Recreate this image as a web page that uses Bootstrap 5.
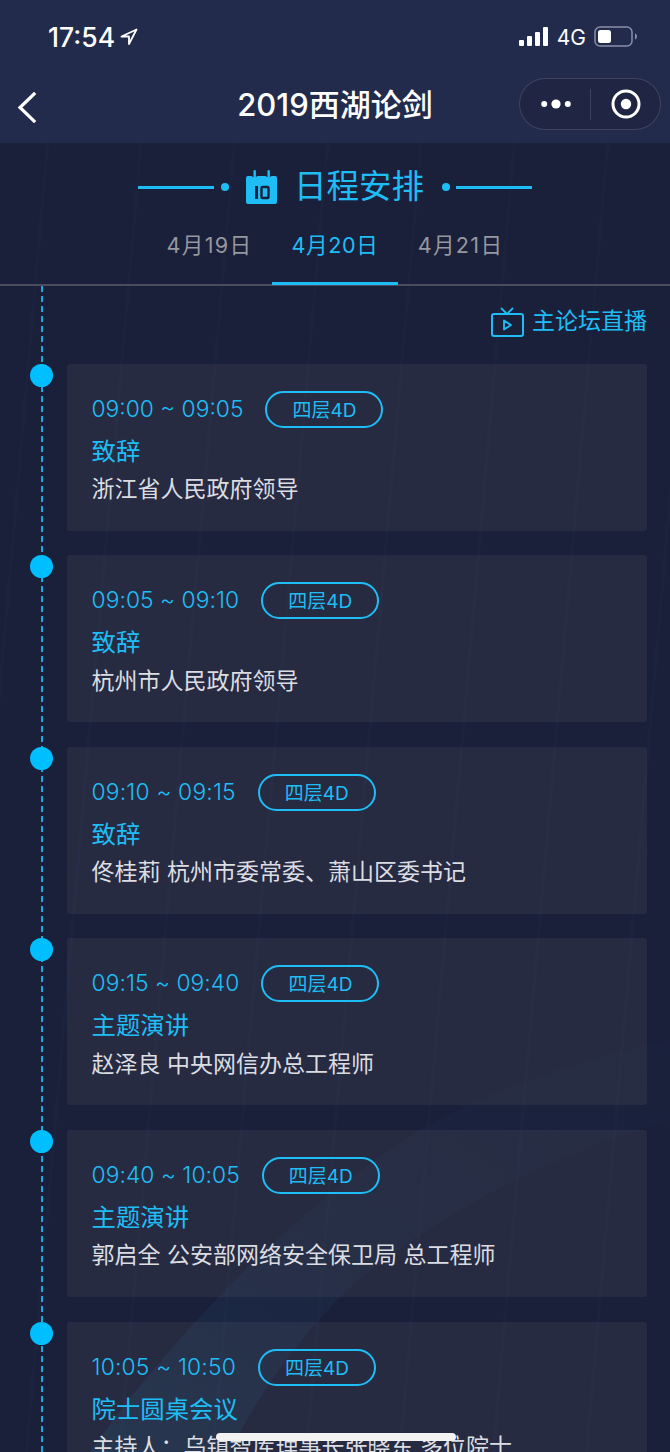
<!DOCTYPE html>
<html lang="zh">
<head>
<meta charset="utf-8">
<link href="https://cdn.jsdelivr.net/npm/bootstrap@5.3.0/dist/css/bootstrap.min.css" rel="stylesheet">
<style>
html,body{height:1452px;overflow:hidden}
body{width:670px;background:#1a203a;color:#fff;font-family:"Inter","Noto Sans CJK SC",sans-serif;position:relative}
.cjk{font-family:"Inter","Noto Sans CJK SC",sans-serif}
.streaks{position:absolute;inset:143px 0 0 0;pointer-events:none;
 background:repeating-linear-gradient(95deg,transparent 0 46px,rgba(60,95,145,.035) 46px 49px,transparent 49px 93px);}
.glow{position:absolute;left:0;top:0;pointer-events:none}
.topbar{background:#232b4c;height:143px;position:relative;z-index:1}
.statusrow{height:72px;padding:2px 32px 0 48px}
.clock{font-size:26.5px;font-weight:500;line-height:1;font-family:"Inter",sans-serif}
.locarrow{margin-left:5px}
.net{font-size:21px;line-height:1;font-family:"Inter",sans-serif}
.navrow{height:71px;position:relative}
.navtitle{font-size:31px;font-weight:500;line-height:1;padding-bottom:7px}
.backbtn{position:absolute;left:17px;top:20px}
.capsule{position:absolute;left:519px;top:6px;width:142px;height:52px;border:1px solid rgba(255,255,255,.14);border-radius:26px;background:#1f2543}
.capdots{margin-left:21px}
.capsep{width:1px;height:31px;background:rgba(255,255,255,.14);margin-left:19px}
.capring{margin-left:20px}
.content{position:relative;z-index:1}
.heading{height:88px;padding-top:16px}
.headrow{height:56px}
.hline{width:76px;height:3px;background:#1fbdf6}
.hdot{width:8px;height:8px;border-radius:50%;background:#1fbdf6}
.hdot-left{margin:0 16px 0 7px}
.hdot-right{margin:0 6px 0 18px}
.htitle{font-size:32.5px;line-height:1;color:#1fbdf6;margin-left:16px;padding-top:1px}
.tabsrow{height:55px;border-bottom:2px solid #4a4c5e}
.daytab{width:125.5px;height:54px;font-size:21.6px;line-height:1;color:#96979f;letter-spacing:1.3px;padding-top:4px}
.daytab.current{color:#1fbdf6;border-bottom:3px solid #1fbdf6;margin-bottom:-1px;letter-spacing:.6px}
.timeline{position:relative;padding:0 23px 0 67px;height:1200px}
.vline{position:absolute;left:41px;top:0;bottom:0;width:2px;opacity:.85;
 background:repeating-linear-gradient(180deg,#1fbdf6 0 6px,transparent 6px 10px)}
.live{height:77.6px;color:#1fbdf6;font-size:23px;line-height:1;padding-bottom:6px}
.event{position:relative;height:167px;margin-bottom:24.6px;background:rgba(255,240,200,.055);border-radius:3px;padding:27px 25px 0 24.5px}
.pin{position:absolute;left:-37.5px;top:0;width:23px;height:23px;border-radius:50%;background:#00bfff}
.slot{font-size:22.8px;line-height:33px;color:#1fbdf6;font-weight:300;padding-bottom:2px}
.ones1{letter-spacing:.06px}
.ones2{letter-spacing:.2px}
.room{width:118px;height:37px;border:2px solid #1fbdf6;border-radius:19px;color:#1fbdf6;font-size:19px;line-height:1;margin-left:22px;padding-top:2px}
.evtitle{font-size:24.4px;line-height:1;color:#1fbdf6;margin-top:11px}
.evbody{font-size:23px;line-height:1;color:#dcdde2;margin-top:15px;white-space:nowrap}
.homebar{position:absolute;left:216px;top:1433px;width:240px;height:8px;border-radius:4px;background:#f2f2f2;z-index:3}
</style>
</head>
<body>
<div class="streaks"></div>
<svg class="glow" width="670" height="1452" viewBox="0 0 670 1452">
  <defs><linearGradient id="bandfade" x1="0" y1="1" x2="1" y2="0"><stop offset="0" stop-color="#1d6c8e" stop-opacity=".17"/><stop offset=".6" stop-color="#2a5a84" stop-opacity=".05"/><stop offset="1" stop-color="#2a5a84" stop-opacity=".02"/></linearGradient></defs>
  <path d="M90 1452C170 1340 290 1210 420 1130 510 1080 600 1055 670 1040V1120C560 1150 450 1210 370 1270 310 1320 260 1390 230 1452Z" fill="url(#bandfade)"/>
</svg>
<header class="topbar">
  <div class="statusrow d-flex align-items-center justify-content-between">
    <div class="d-flex align-items-center">
      <span class="clock">17:54</span>
      <svg class="locarrow" width="18" height="18" viewBox="0 0 18 18"><path d="M16.5 1.5 1.5 8.5h7.5v7.5z" fill="none" stroke="#fff" stroke-width="1.8" stroke-linejoin="round"/></svg>
    </div>
    <div class="d-flex align-items-center gap-2">
      <svg width="30" height="20" viewBox="0 0 30 20"><g fill="#fff"><rect x="0" y="13" width="5" height="6" rx="1"/><rect x="8" y="9" width="5" height="10" rx="1"/><rect x="16" y="5" width="5" height="14" rx="1"/><rect x="24" y="0" width="5" height="19" rx="1"/></g></svg>
      <span class="net">4G</span>
      <svg width="44" height="22" viewBox="0 0 44 22"><rect x="1" y="1" width="37" height="19" rx="5" fill="none" stroke="#8a8fa6" stroke-width="1.5"/><rect x="4" y="4" width="13" height="13" rx="2.5" fill="#fff"/><path d="M41 7.5c1.5.6 2 2 2 3s-.5 2.4-2 3z" fill="#8a8fa6"/></svg>
    </div>
  </div>
  <div class="navrow d-flex align-items-center justify-content-center">
    <svg class="backbtn" width="20" height="31" viewBox="0 0 20 31"><path d="M17 2 3 15.5 17 29" fill="none" stroke="#fff" stroke-width="3.2" stroke-linecap="square"/></svg>
    <span class="navtitle cjk">2019西湖论剑</span>
    <div class="capsule d-flex align-items-center">
      <svg class="capdots" width="30" height="12" viewBox="0 0 30 12"><g fill="#fff"><circle cx="3.2" cy="6" r="3"/><circle cx="15" cy="6" r="4.6"/><circle cx="26.8" cy="6" r="3"/></g></svg>
      <span class="capsep"></span>
      <svg class="capring" width="30" height="30" viewBox="0 0 30 30"><circle cx="15" cy="15" r="13" fill="none" stroke="#fff" stroke-width="3"/><circle cx="15" cy="15" r="5.2" fill="#fff"/></svg>
    </div>
  </div>
</header>
<main class="content">
  <div class="heading d-flex align-items-start justify-content-center">
    <div class="headrow d-flex align-items-center">
      <span class="hline"></span><span class="hdot hdot-left"></span>
      <svg width="33" height="34" viewBox="0 0 33 34"><path d="M3 6h3.500a4.500 4.500 0 0 0 6 0h8a4.500 4.500 0 0 0 6 0H30a2 2 0 0 1 2 2v24a2 2 0 0 1-2 2H3a2 2 0 0 1-2-2V8a2 2 0 0 1 2-2z" fill="#1fbdf6"/><rect x="8.500" y="0" width="2.400" height="9" rx="1.200" fill="#1fbdf6"/><rect x="22.500" y="0" width="2.400" height="9" rx="1.200" fill="#1fbdf6"/><rect x="10" y="16" width="3" height="13" fill="#1a203a"/><rect x="16.500" y="17" width="7" height="11" rx="1" fill="none" stroke="#1a203a" stroke-width="2.400"/></svg>
      <span class="htitle cjk">日程安排</span>
      <span class="hdot hdot-right"></span><span class="hline"></span>
    </div>
  </div>
  <div class="tabsrow d-flex justify-content-center">
    <div class="daytab d-flex align-items-start justify-content-center">4月19日</div>
    <div class="daytab current d-flex align-items-start justify-content-center">4月20日</div>
    <div class="daytab d-flex align-items-start justify-content-center">4月21日</div>
  </div>
  <section class="timeline">
    <div class="vline"></div>
    <div class="live d-flex align-items-center justify-content-end gap-2">
      <svg width="33" height="30" viewBox="0 0 33 30"><path d="M10 1l6 6 6-6" fill="none" stroke="#1fbdf6" stroke-width="1.8"/><rect x="1" y="7" width="31" height="22" rx="2" fill="none" stroke="#1fbdf6" stroke-width="2"/><path d="M13 13.500v9l7-4.500z" fill="none" stroke="#1fbdf6" stroke-width="1.8" stroke-linejoin="round"/></svg>
      <span>主论坛直播</span>
    </div>
    <article class="event"><span class="pin"></span>
      <div class="d-flex align-items-center"><span class="slot">09:00 ~ 09:05</span><span class="room d-flex align-items-center justify-content-center">四层4D</span></div>
      <div class="evtitle">致辞</div><div class="evbody">浙江省人民政府领导</div></article>
    <article class="event"><span class="pin"></span>
      <div class="d-flex align-items-center"><span class="slot ones1">09:05 ~ 09:10</span><span class="room d-flex align-items-center justify-content-center">四层4D</span></div>
      <div class="evtitle">致辞</div><div class="evbody">杭州市人民政府领导</div></article>
    <article class="event"><span class="pin"></span>
      <div class="d-flex align-items-center"><span class="slot ones2">09:10 ~ 09:15</span><span class="room d-flex align-items-center justify-content-center">四层4D</span></div>
      <div class="evtitle">致辞</div><div class="evbody">佟桂莉 杭州市委常委、萧山区委书记</div></article>
    <article class="event"><span class="pin"></span>
      <div class="d-flex align-items-center"><span class="slot ones1">09:15 ~ 09:40</span><span class="room d-flex align-items-center justify-content-center">四层4D</span></div>
      <div class="evtitle">主题演讲</div><div class="evbody">赵泽良 中央网信办总工程师</div></article>
    <article class="event"><span class="pin"></span>
      <div class="d-flex align-items-center"><span class="slot ones1">09:40 ~ 10:05</span><span class="room d-flex align-items-center justify-content-center">四层4D</span></div>
      <div class="evtitle">主题演讲</div><div class="evbody">郭启全 公安部网络安全保卫局 总工程师</div></article>
    <article class="event"><span class="pin"></span>
      <div class="d-flex align-items-center"><span class="slot ones2">10:05 ~ 10:50</span><span class="room d-flex align-items-center justify-content-center">四层4D</span></div>
      <div class="evtitle">院士圆桌会议</div><div class="evbody">主持人：乌镇智库理事长张晓东 多位院士</div></article>
  </section>
</main>
<div class="homebar"></div>
<script src="https://cdn.jsdelivr.net/npm/bootstrap@5.3.0/dist/js/bootstrap.bundle.min.js"></script>
</body>
</html>
